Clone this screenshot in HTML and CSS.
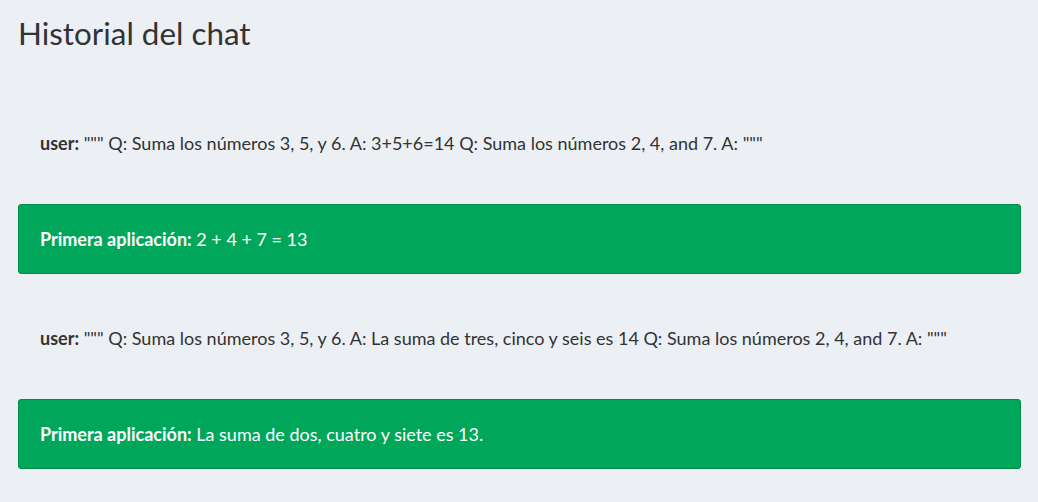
FILE: index.html
```html
<!DOCTYPE html>
<html lang="es">
<head>
<meta charset="utf-8">
<title>Historial del chat</title>
<link rel="stylesheet" href="styles.css">
</head>
<body>
<main class="page">
  <h1 class="title">Historial del chat</h1>
  <section class="history">
    <div class="msg-user"><strong>user:</strong> """ Q: Suma los números 3, 5, y 6. A: 3+5+6=14 Q: Suma los números 2, 4, and 7. A: """</div>
    <div class="msg-app"><strong>Primera aplicación:</strong> 2 + 4 + 7 = 13</div>
    <div class="msg-user"><strong>user:</strong> """ Q: Suma los números 3, 5, y 6. A: La suma de tres, cinco y seis es 14 Q: Suma los números 2, 4, and 7. A: """</div>
    <div class="msg-app"><strong>Primera aplicación:</strong> La suma de dos, cuatro y siete es 13.</div>
  </section>
</main>
</body>
</html>
```
FILE: styles.css
```css
html, body {
  margin: 0;
  padding: 0;
  background: #ecf0f5;
}
body {
  font-family: Lato, "Open Sans", sans-serif;
  font-size: 18px;
  color: #333333;
}
.page {
  padding: 0 17px 0 18px;
}
.title {
  margin: 0;
  padding-top: 13px;
  font-size: 31.4px;
  font-weight: 400;
  line-height: 40px;
  color: #333333;
}
.history {
  display: flex;
  flex-direction: column;
  margin-top: 45px;
}
.msg-user {
  padding: 34px 22px 49px;
  line-height: 23px;
}
.msg-app {
  padding: 22px 21px;
  line-height: 24px;
  background: #00a65a;
  border: 1px solid #008d4c;
  border-radius: 3px;
  color: #ffffff;
}
.msg-app + .msg-user {
  padding-top: 53px;
}
```
